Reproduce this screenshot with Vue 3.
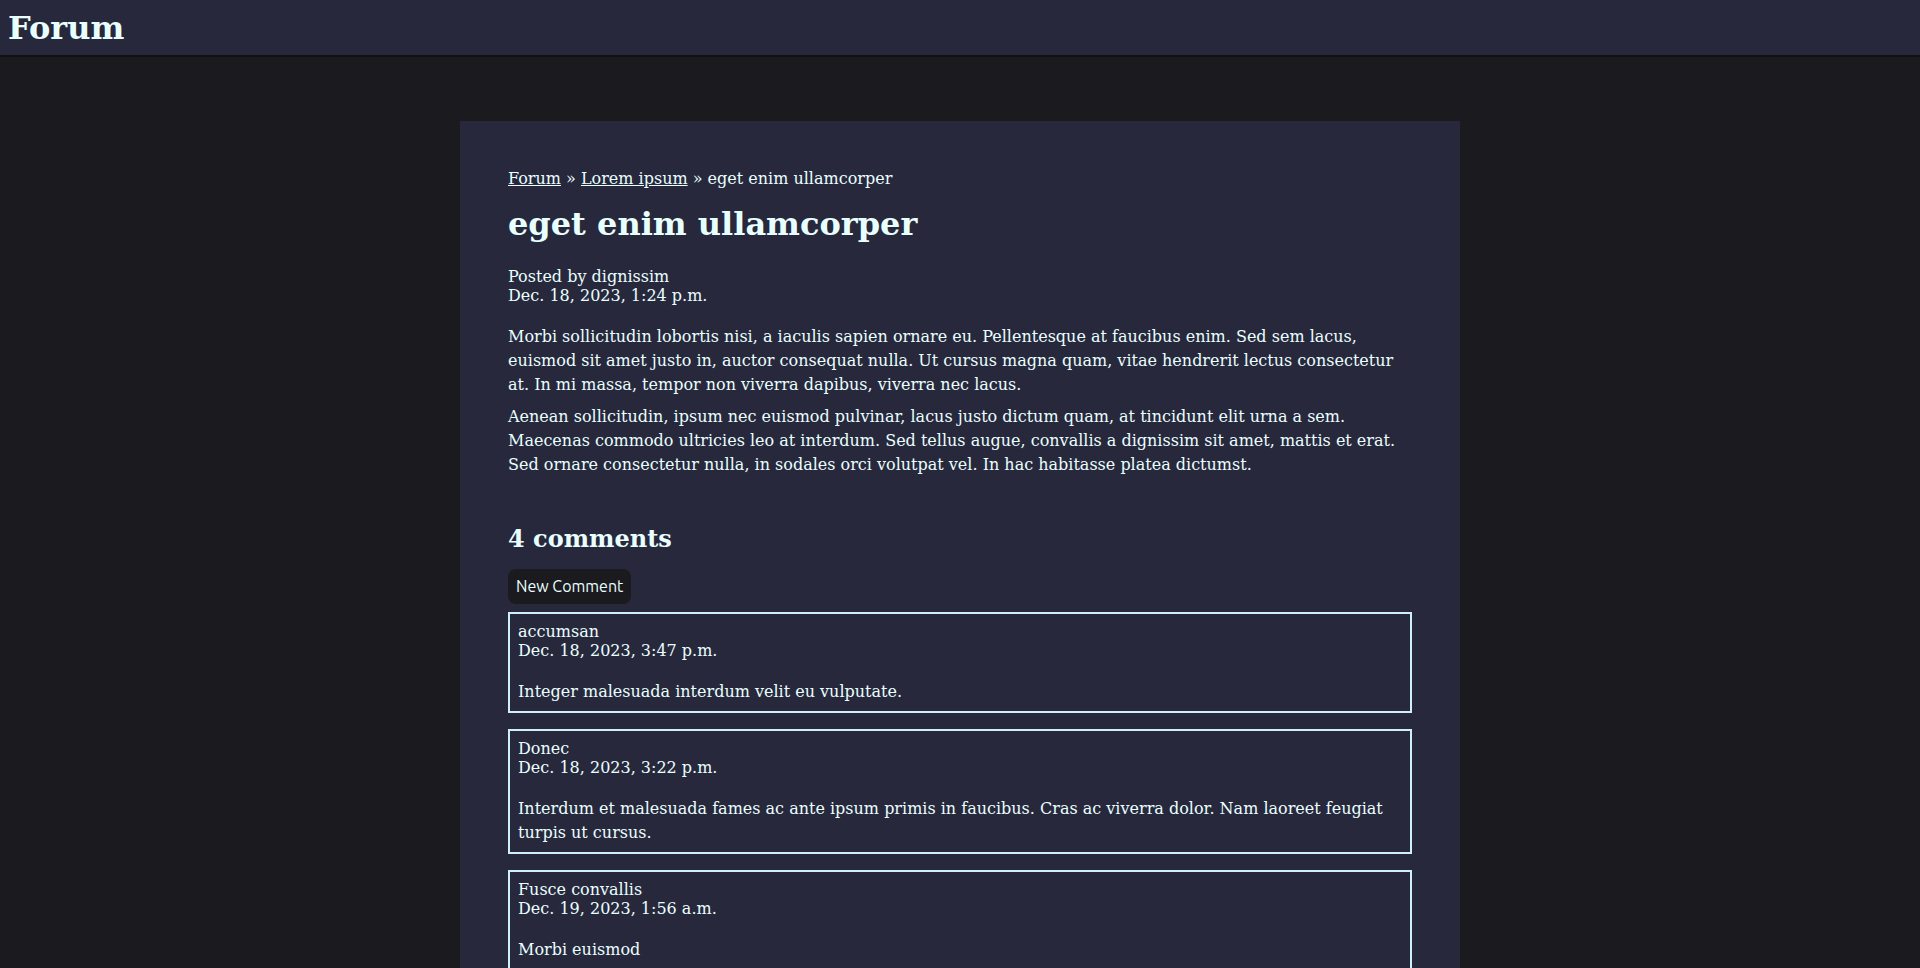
<script setup>
const comments = [
  { author: 'accumsan', date: 'Dec. 18, 2023, 3:47 p.m.', text: 'Integer malesuada interdum velit eu vulputate.' },
  { author: 'Donec', date: 'Dec. 18, 2023, 3:22 p.m.', text: 'Interdum et malesuada fames ac ante ipsum primis in faucibus. Cras ac viverra dolor. Nam laoreet feugiat turpis ut cursus.' },
  { author: 'Fusce convallis', date: 'Dec. 19, 2023, 1:56 a.m.', text: 'Morbi euismod' },
]
</script>

<template>
  <div class="page">
    <header class="topbar"><h1>Forum</h1></header>
    <main class="panel">
      <nav class="crumbs"><a href="#">Forum</a> » <a href="#">Lorem ipsum</a> » eget enim ullamcorper</nav>
      <h1 class="title">eget enim ullamcorper</h1>
      <div class="meta">Posted by dignissim<br>Dec. 18, 2023, 1:24 p.m.</div>
      <div class="body">
        <p>Morbi sollicitudin lobortis nisi, a iaculis sapien ornare eu. Pellentesque at faucibus enim. Sed sem lacus, euismod sit amet justo in, auctor consequat nulla. Ut cursus magna quam, vitae hendrerit lectus consectetur at. In mi massa, tempor non viverra dapibus, viverra nec lacus.</p>
        <p>Aenean sollicitudin, ipsum nec euismod pulvinar, lacus justo dictum quam, at tincidunt elit urna a sem. Maecenas commodo ultricies leo at interdum. Sed tellus augue, convallis a dignissim sit amet, mattis et erat. Sed ornare consectetur nulla, in sodales orci volutpat vel. In hac habitasse platea dictumst.</p>
      </div>
      <h2 class="count">4 comments</h2>
      <button type="button" class="new">New Comment</button>
      <article v-for="c in comments" :key="c.author" class="comment">
        <div class="meta">{{ c.author }}<br>{{ c.date }}</div>
        <div class="body"><p>{{ c.text }}</p></div>
      </article>
    </main>
  </div>
</template>

<style>
body {
  background: #1b1a1e;
  overflow: hidden;
}
</style>

<style scoped>
.page {
  height: 100vh;
  overflow: hidden;
  color: #e8ffff;
  font-family: "DejaVu Serif", serif;
  font-size: 16px;
  line-height: 19px;
}
.topbar {
  padding: 8px 8px 7px;
  background: #28283c;
  border-bottom: 2px solid #111114;
}
.topbar h1 {
  margin: 0;
  font-size: 32px;
  line-height: 40px;
}
.panel {
  box-sizing: border-box;
  max-width: 1000px;
  margin: 64px auto 0;
  padding: 48px;
  background: #28283c;
}
.crumbs a {
  color: inherit;
}
.title {
  margin: 16px 0 23px;
  font-size: 32px;
  line-height: 40px;
}
.body {
  margin-top: 20px;
  line-height: 24px;
}
.body p {
  margin: 0 0 8px;
}
.count {
  margin: 48px 0 16px;
  font-size: 24px;
  line-height: 28px;
}
.new {
  display: block;
  padding: 8px;
  border: 0;
  border-radius: 8px;
  background: #1b1a1e;
  color: #e8ffff;
  font-family: Ubuntu, "Noto Sans", sans-serif;
  font-size: 16px;
  line-height: 19px;
}
.comment {
  margin: 8px 0 16px;
  padding: 8px 8px 7px;
  border: 2px solid #d0f0f8;
}
.comment .body p {
  margin: 0;
}
</style>
